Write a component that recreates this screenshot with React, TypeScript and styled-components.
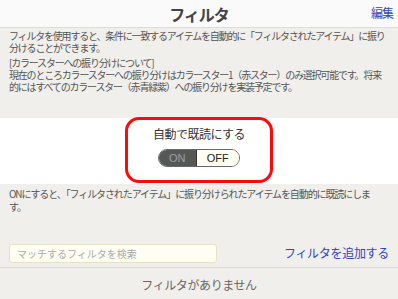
import React from 'react'
import styled, { createGlobalStyle } from 'styled-components'

const GlobalStyle = createGlobalStyle`
  html, body {
    margin: 0;
    padding: 0;
    background-color: #f0efeb;
    font-family: "Noto Sans CJK JP", "Noto Sans", sans-serif;
  }
`
const Wrapper = styled.div`
  width: 398px;
  height: 299px;
  overflow: hidden;
  display: flex;
  flex-direction: column;
`
const Header = styled.div`
  height: 27px;
  border-bottom: 1px solid #dcdcd8;
  background-color: #fafafa;
  position: relative;
  display: flex;
  align-items: center;
  justify-content: center;
`
const Title = styled.div`
  font-size: 16px;
  font-weight: bold;
  color: #444;
  letter-spacing: -1px;
`
const EditLink = styled.a`
  position: absolute;
  right: 5px;
  top: 4px;
  font-size: 12px;
  color: #3344bb;
  letter-spacing: -1px;
`
const Description = styled.div`
  padding: 2px 9px 0;
  font-size: 10px;
  line-height: 12px;
  color: #555;
  letter-spacing: -1.2px;
  white-space: nowrap;
`
const Paragraph = styled.p`
  margin: 0 0 3px;
`
const SettingSection = styled.div`
  margin-top: 22px;
  height: 66px;
  background-color: #fff;
  display: flex;
  justify-content: center;
`
const RedFrame = styled.div`
  width: 142px;
  height: 60px;
  margin-top: -1px;
  border: 3px solid #ff0a0a;
  border-radius: 14px;
  display: flex;
  flex-direction: column;
  align-items: center;
`
const SettingLabel = styled.div`
  margin-top: 6px;
  font-size: 12px;
  line-height: 16px;
  color: #333;
  letter-spacing: -0.5px;
`
const Toggle = styled.div`
  margin-top: 7px;
  width: 80px;
  height: 16px;
  border: 1px solid #666;
  border-radius: 9px;
  overflow: hidden;
  display: flex;
`
const ToggleHalf = styled.div<{ $active?: boolean; $width: number }>`
  width: ${p => p.$width}px;
  display: flex;
  align-items: center;
  justify-content: center;
  font-family: "Liberation Sans", Arial, sans-serif;
  font-size: 11px;
  background-color: ${p => (p.$active ? '#555857' : '#fffef0')};
  color: ${p => (p.$active ? '#a0a0a0' : '#222')};
  border-right: ${p => (p.$active ? '1px solid #333' : 'none')};
`
const Note = styled.div`
  padding: 3px 9px 0;
  font-size: 10px;
  line-height: 13px;
  color: #555;
  letter-spacing: -1.1px;
  white-space: nowrap;
`
const SearchRow = styled.div`
  margin-top: 31px;
  padding: 0 9px;
  height: 23px;
  display: flex;
  align-items: flex-start;
  justify-content: space-between;
  border-bottom: 1px solid #d8d8d4;
`
const SearchInput = styled.input`
  box-sizing: border-box;
  width: 208px;
  height: 19px;
  padding: 0 7px;
  border: 1px solid #e6e2c8;
  border-radius: 3px;
  background-color: #fffef2;
  font-family: "Noto Sans CJK JP", sans-serif;
  font-size: 10px;
  letter-spacing: 0;
  outline: none;
  &::placeholder {
    color: #aaa;
  }
`
const AddLink = styled.a`
  margin-top: 1px;
  font-size: 12px;
  line-height: 16px;
  color: #3344bb;
  letter-spacing: -0.3px;
`
const EmptyText = styled.div`
  text-align: center;
  margin-top: 8px;
  font-size: 12px;
  color: #666;
  letter-spacing: -0.4px;
`

export default function App () {
  return (
    <>
      <GlobalStyle />
      <Wrapper>
        <Header>
          <Title>フィルタ</Title>
          <EditLink>編集</EditLink>
        </Header>
        <Description>
          <Paragraph>
            フィルタを使用すると、条件に一致するアイテムを自動的に「フィルタされたアイテム」に振り<br />
            分けることができます。
          </Paragraph>
          <Paragraph>
            [カラースターへの振り分けについて]<br />
            現在のところカラースターへの振り分けはカラースター1（赤スター）のみ選択可能です。将来<br />
            的にはすべてのカラースター（赤青緑紫）への振り分けを実装予定です。
          </Paragraph>
        </Description>
        <SettingSection>
          <RedFrame>
            <SettingLabel>自動で既読にする</SettingLabel>
            <Toggle>
              <ToggleHalf $active $width={37}>ON</ToggleHalf>
              <ToggleHalf $width={43}>OFF</ToggleHalf>
            </Toggle>
          </RedFrame>
        </SettingSection>
        <Note>
          ONにすると、「フィルタされたアイテム」に振り分けられたアイテムを自動的に既読にしま<br />
          す。
        </Note>
        <SearchRow>
          <SearchInput placeholder="マッチするフィルタを検索" />
          <AddLink>フィルタを追加する</AddLink>
        </SearchRow>
        <EmptyText>フィルタがありません</EmptyText>
      </Wrapper>
    </>
  )
}
